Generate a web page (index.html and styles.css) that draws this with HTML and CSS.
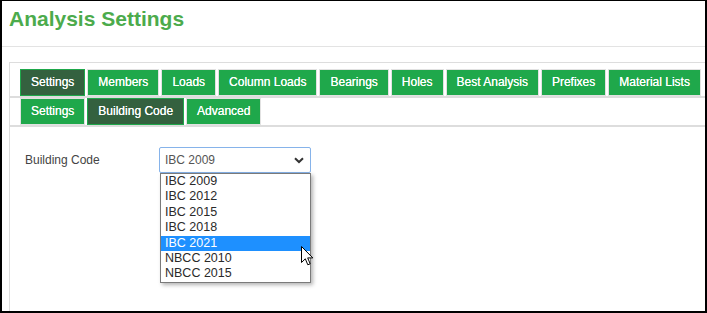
FILE: index.html
```html
<!DOCTYPE html>
<html lang="en">
<head>
  <meta charset="UTF-8" />
  <title>Analysis Settings</title>
  <link rel="stylesheet" href="styles.css">
</head>
<body>
  <div class="frame">
    <div class="page-header">
      <h1>Analysis Settings</h1>
    </div>

    <div class="panel">
      <ul class="tabs tabs-main">
        <li class="tab active">Settings</li>
        <li class="tab">Members</li>
        <li class="tab">Loads</li>
        <li class="tab">Column Loads</li>
        <li class="tab">Bearings</li>
        <li class="tab">Holes</li>
        <li class="tab">Best Analysis</li>
        <li class="tab">Prefixes</li>
        <li class="tab">Material Lists</li>
      </ul>
      <ul class="tabs tabs-sub">
        <li class="tab">Settings</li>
        <li class="tab active">Building Code</li>
        <li class="tab">Advanced</li>
      </ul>

      <div class="form-row">
        <label class="field-label">Building Code</label>
        <div class="select">
          <span class="select-value">IBC 2009</span>
          <svg class="chevron" width="10" height="7" viewBox="0 0 10 7">
            <path d="M1 1.2 L5 5 L9 1.2" fill="none" stroke="#333" stroke-width="2"/>
          </svg>
          <ul class="dropdown">
            <li>IBC 2009</li>
            <li>IBC 2012</li>
            <li>IBC 2015</li>
            <li>IBC 2018</li>
            <li class="hover">IBC 2021</li>
            <li>NBCC 2010</li>
            <li>NBCC 2015</li>
            <svg class="cursor" width="13" height="21" viewBox="0 0 13 21">
              <path d="M0.5 0.5 L0.5 16.5 L4.3 12.8 L6.8 18.8 L9.2 17.8 L6.7 11.9 L11.8 11.9 Z" fill="#fff" stroke="#000" stroke-width="1" stroke-linejoin="round"/>
            </svg>
          </ul>
        </div>
      </div>
    </div>
  </div>
</body>
</html>
```

FILE: styles.css
```css
body {
  margin: 0;
  padding: 0;
  background: #fff;
  font-family: "Liberation Sans", Arial, sans-serif;
}
.frame {
  width: 707px;
  height: 313px;
  box-sizing: border-box;
  border: 2px solid #000;
  border-top-width: 1px;
  display: flex;
  flex-direction: column;
  overflow: hidden;
}
.page-header {
  padding: 6px 7px 15px;
  border-bottom: 1px solid #e3e3e3;
}
.page-header h1 {
  margin: 0;
  font-size: 21px;
  line-height: 24px;
  font-weight: bold;
  color: #4cab4c;
}
.panel {
  flex: 1;
  margin: 15px 0 0 7px;
  border-top: 1px solid #dddddd;
  border-left: 1px solid #dddddd;
}
.tabs {
  list-style: none;
  margin: 0;
  padding: 0 0 0 10px;
  display: flex;
  border-bottom: 2px solid #dddddd;
}
.tabs-main {
  padding-top: 6px;
}
.tab {
  height: 25px;
  line-height: 25px;
  padding: 0 10px;
  margin-right: 2px;
  font-size: 12px;
  color: #fff;
  background: #1fa84b;
  border: 1px solid #e2e2e2;
  text-shadow: 0 0 0.4px #fff;
  white-space: nowrap;
}
.tab.active {
  background: #34613f;
  border-color: #1fa84b;
}
.form-row {
  display: flex;
  align-items: center;
  padding: 20px 0 0 15px;
}
.field-label {
  width: 134px;
  font-size: 12px;
  color: #444;
}
.select {
  position: relative;
  width: 152px;
  height: 26px;
  box-sizing: border-box;
  border: 1px solid #86b3ea;
  border-radius: 2px;
  padding: 0 5px;
  display: flex;
  align-items: center;
  justify-content: space-between;
  font-size: 12px;
  color: #555;
}
.chevron {
  margin-right: 1px;
}
.dropdown {
  position: absolute;
  top: 25px;
  left: 0;
  width: 151px;
  box-sizing: border-box;
  margin: 0;
  padding: 0;
  list-style: none;
  background: #fff;
  border: 1px solid #7a7a7a;
  box-shadow: 2px 2px 4px rgba(0, 0, 0, 0.3);
}
.dropdown li {
  height: 15.4px;
  line-height: 15.4px;
  padding-left: 4px;
  font-size: 12.5px;
  color: #2a2a2a;
}
.dropdown li.hover {
  background: #1e90ff;
  color: #fff;
}
.cursor {
  position: absolute;
  left: 140px;
  top: 72px;
}
```
